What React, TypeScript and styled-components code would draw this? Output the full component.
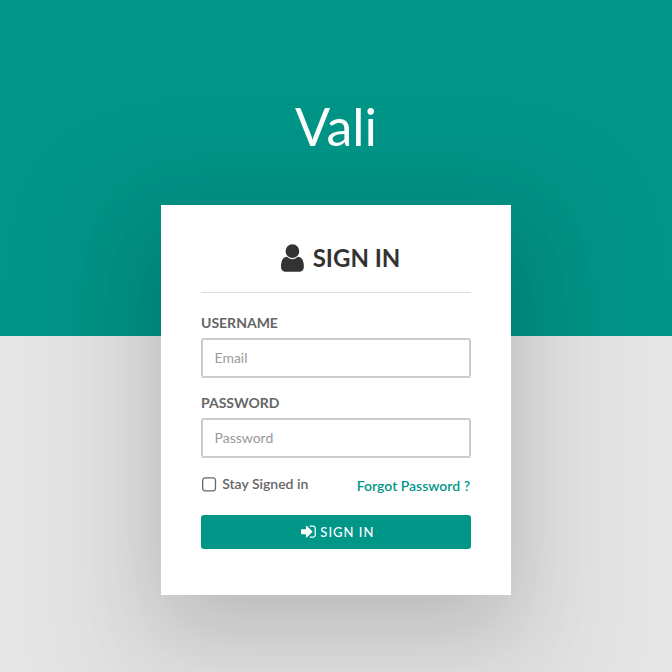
import { useState } from 'react';
import styled, { createGlobalStyle } from 'styled-components';

const GlobalStyle = createGlobalStyle`
	* {
		box-sizing: border-box;
	}

	body {
		margin: 0;
		color: #666;
		font-family: Lato, sans-serif;
		font-size: 14px;
		line-height: 20px;
	}
`;

const Page = styled.main`
	display: flex;
	flex-direction: column;
	align-items: center;
	height: 100vh;
	padding-top: 98px;
	overflow: hidden;
	background: linear-gradient(#009688 50%, #e7e7e7 50%);
`;

const Logo = styled.h1`
	margin: 0 0 50px;
	color: #fff;
	font-size: 52px;
	font-weight: 400;
	line-height: 57px;
`;

const LoginBox = styled.section`
	flex: none;
	width: 350px;
	height: 390px;
	padding: 40px;
	background: #fff;
	box-shadow: 0 50px 125px 90px rgba(0, 0, 0, 0.05),
		0 30px 80px 0 rgba(0, 0, 0, 0.16);
`;

const LoginHead = styled.h3`
	display: flex;
	align-items: center;
	justify-content: center;
	height: 48px;
	margin: 0 0 20px;
	padding-bottom: 21px;
	border-bottom: 1px solid #ddd;
	color: #333;
	font-size: 24px;
	font-weight: 700;
	line-height: 26px;
`;

const FormGroup = styled.div`
	margin-bottom: 15px;
`;

const Label = styled.label`
	display: block;
	margin-bottom: 5px;
	font-weight: 700;
`;

const Input = styled.input`
	display: block;
	width: 100%;
	height: 40px;
	padding: 7px 11.5px 9px;
	border: 2px solid #ccc;
	border-radius: 3px;
	background: #fff;
	color: #555;
	font: inherit;
	outline: none;

	&::placeholder {
		color: #999;
		opacity: 1;
	}
`;

const Utility = styled.div`
	display: flex;
	align-items: flex-start;
	justify-content: space-between;
	height: 42px;
`;

const CheckLabel = styled.label`
	display: flex;
	align-items: center;
	padding: 1px 0 0 1px;
	font-weight: 600;
	cursor: pointer;

	input {
		display: none;
	}
`;

const CheckText = styled.span`
	margin-left: 6px;
`;

const ForgotLink = styled.a`
	margin-top: 3px;
	padding-right: 1px;
	color: #009688;
	font-weight: 600;
	text-decoration: none;
`;

const SubmitButton = styled.button`
	display: flex;
	align-items: center;
	justify-content: center;
	width: 100%;
	height: 34px;
	padding: 0;
	border: 0;
	border-radius: 3px;
	background: #009688;
	color: #fff;
	font-family: inherit;
	font-size: 13px;
	font-weight: 500;
	letter-spacing: 1px;
	cursor: pointer;
`;

const Icon = styled.svg<{ $size: number; $gap?: string }>`
	flex: none;
	height: ${({ $size }) => $size}px;
	margin: ${({ $gap }) => $gap || '0'};
	overflow: visible;
	fill: currentColor;
`;

const UserIcon = () => (
	<Icon $size={32} $gap="0 9.2px 0 9px" viewBox="0 0 1280 1792">
		<path d="M1280 1399q0 109-62.5 187t-150.5 78h-854q-88 0-150.5-78t-62.5-187q0-85 8.5-160.5t31.5-152 58.5-131 94-89 134.5-34.5q131 128 313 128t313-128q76 0 134.5 34.5t94 89 58.5 131 31.5 152 8.5 160.5zm-256-887q0 159-112.5 271.5t-271.5 112.5-271.5-112.5-112.5-271.5 112.5-271.5 271.5-112.5 271.5 112.5 112.5 271.5z" />
	</Icon>
);

const SquareIcon = ({ checked }: { checked: boolean }) => (
	<Icon $size={18} $gap="1px 0 0" viewBox="0 0 1408 1792">
		<g transform="matrix(1 0 0 -1 0 1536)">
			<path d="M1120 1280h-832q-66 0 -113 -47t-47 -113v-832q0 -66 47 -113t113 -47h832q66 0 113 47t47 113v832q0 66 -47 113t-113 47zM1408 1120v-832q0 -119 -84.5 -203.5t-203.5 -84.5h-832q-119 0 -203.5 84.5t-84.5 203.5v832q0 119 84.5 203.5t203.5 84.5h832 q119 0 203.5 -84.5t84.5 -203.5z" />
			{checked && <path d="M300 700l110 110 200-200 400 400 110-110-510-510z" />}
		</g>
	</Icon>
);

const SignInIcon = () => (
	<Icon $size={17.33} $gap="0 4.6px 0 3.4px" viewBox="0 0 1536 1792">
		<g transform="matrix(1 0 0 -1 0 1536)">
			<path d="M1184 640q0 -26 -19 -45l-544 -544q-19 -19 -45 -19t-45 19t-19 45v288h-448q-26 0 -45 19t-19 45v384q0 26 19 45t45 19h448v288q0 26 19 45t45 19t45 -19l544 -544q19 -19 19 -45zM1536 992v-704q0 -119 -84.5 -203.5t-203.5 -84.5h-320q-13 0 -22.5 9.5t-9.5 22.5q0 4 -1 20t-0.5 26.5t3 23.5t10 19.5t20.5 6.5h320q66 0 113 47t47 113v704q0 66 -47 113t-113 47h-288h-11h-13t-11.5 1t-11.5 3t-8 5.5t-7 9t-2 13.5q0 4 -1 20t-0.5 26.5t3 23.5t10 19.5t20.5 6.5h320q119 0 203.5 -84.5t84.5 -203.5z" />
		</g>
	</Icon>
);

const App = () => {
	const [staySignedIn, setStaySignedIn] = useState(false);

	return (
		<Page>
			<GlobalStyle />
			<Logo>Vali</Logo>
			<LoginBox>
				<form onSubmit={(e) => e.preventDefault()}>
					<LoginHead>
						<UserIcon />
						SIGN IN
					</LoginHead>
					<FormGroup>
						<Label htmlFor="email">USERNAME</Label>
						<Input id="email" type="text" placeholder="Email" />
					</FormGroup>
					<FormGroup>
						<Label htmlFor="password">PASSWORD</Label>
						<Input id="password" type="password" placeholder="Password" />
					</FormGroup>
					<Utility>
						<CheckLabel>
							<input
								type="checkbox"
								checked={staySignedIn}
								onChange={(e) => setStaySignedIn(e.target.checked)}
							/>
							<SquareIcon checked={staySignedIn} />
							<CheckText>Stay Signed in</CheckText>
						</CheckLabel>
						<ForgotLink href="#">Forgot Password ?</ForgotLink>
					</Utility>
					<SubmitButton type="submit">
						<SignInIcon />
						SIGN IN
					</SubmitButton>
				</form>
			</LoginBox>
		</Page>
	);
};

export default App;
